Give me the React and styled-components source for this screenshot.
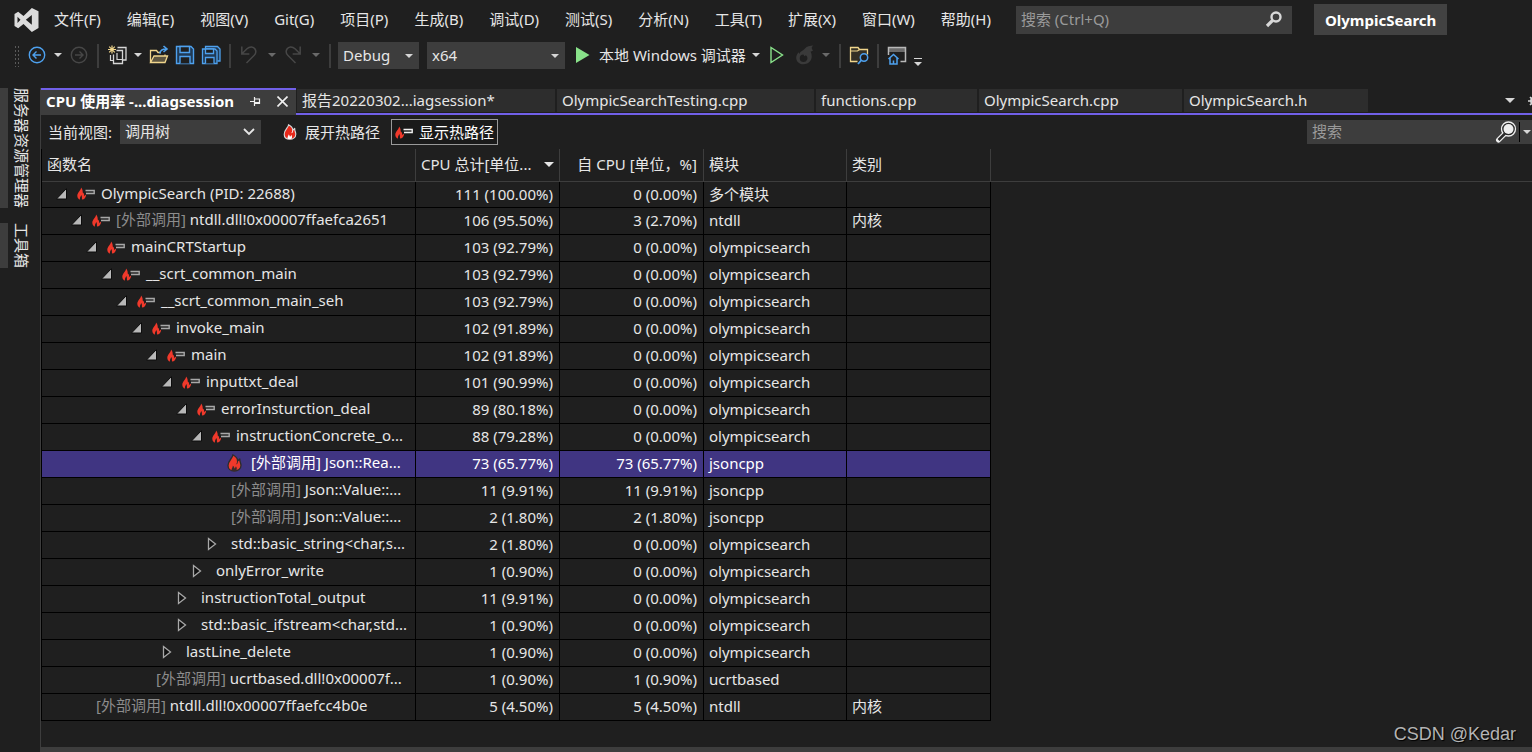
import { useState } from 'react';
import styled, { createGlobalStyle, css } from 'styled-components';

const bg = '#1f1f1f';
const panel = '#3d3d3d';
const tabBg = '#2d2d2d';
const purple = '#7160e8';
const text = '#e6e6e6';
const muted = '#9a9a9a';
const blue = '#4ea1ee';
const disabled = '#474747';

const menuItems = [
  '文件(F)',
  '编辑(E)',
  '视图(V)',
  'Git(G)',
  '项目(P)',
  '生成(B)',
  '调试(D)',
  '测试(S)',
  '分析(N)',
  '工具(T)',
  '扩展(X)',
  '窗口(W)',
  '帮助(H)',
];

const tabs = [
  { name: '报告20220302...iagsession*', width: 258 },
  { name: 'OlympicSearchTesting.cpp', width: 257 },
  { name: 'functions.cpp', width: 161 },
  { name: 'OlympicSearch.cpp', width: 203 },
  { name: 'OlympicSearch.h', width: 184 },
];

const rows = [
  { level: 0, state: 'open', icon: 'path', name: 'OlympicSearch (PID: 22688)', total: '111 (100.00%)', self: '0 (0.00%)', module: '多个模块' },
  { level: 1, state: 'open', icon: 'path', external: true, name: 'ntdll.dll!0x00007ffaefca2651', total: '106 (95.50%)', self: '3 (2.70%)', module: 'ntdll', category: '内核' },
  { level: 2, state: 'open', icon: 'path', name: 'mainCRTStartup', total: '103 (92.79%)', self: '0 (0.00%)', module: 'olympicsearch' },
  { level: 3, state: 'open', icon: 'path', name: '__scrt_common_main', total: '103 (92.79%)', self: '0 (0.00%)', module: 'olympicsearch' },
  { level: 4, state: 'open', icon: 'path', name: '__scrt_common_main_seh', total: '103 (92.79%)', self: '0 (0.00%)', module: 'olympicsearch' },
  { level: 5, state: 'open', icon: 'path', name: 'invoke_main', total: '102 (91.89%)', self: '0 (0.00%)', module: 'olympicsearch' },
  { level: 6, state: 'open', icon: 'path', name: 'main', total: '102 (91.89%)', self: '0 (0.00%)', module: 'olympicsearch' },
  { level: 7, state: 'open', icon: 'path', name: 'inputtxt_deal', total: '101 (90.99%)', self: '0 (0.00%)', module: 'olympicsearch' },
  { level: 8, state: 'open', icon: 'path', name: 'errorInsturction_deal', total: '89 (80.18%)', self: '0 (0.00%)', module: 'olympicsearch' },
  { level: 9, state: 'open', icon: 'path', name: 'instructionConcrete_o...', total: '88 (79.28%)', self: '0 (0.00%)', module: 'olympicsearch' },
  { level: 10, icon: 'flame', external: true, selected: true, name: 'Json::Rea...', total: '73 (65.77%)', self: '73 (65.77%)', module: 'jsoncpp' },
  { level: 10, external: true, name: 'Json::Value::...', total: '11 (9.91%)', self: '11 (9.91%)', module: 'jsoncpp' },
  { level: 10, external: true, name: 'Json::Value::...', total: '2 (1.80%)', self: '2 (1.80%)', module: 'jsoncpp' },
  { level: 10, state: 'closed', name: 'std::basic_string<char,s...', total: '2 (1.80%)', self: '0 (0.00%)', module: 'olympicsearch' },
  { level: 9, state: 'closed', name: 'onlyError_write', total: '1 (0.90%)', self: '0 (0.00%)', module: 'olympicsearch' },
  { level: 8, state: 'closed', name: 'instructionTotal_output', total: '11 (9.91%)', self: '0 (0.00%)', module: 'olympicsearch' },
  { level: 8, state: 'closed', name: 'std::basic_ifstream<char,std...', total: '1 (0.90%)', self: '0 (0.00%)', module: 'olympicsearch' },
  { level: 7, state: 'closed', name: 'lastLine_delete', total: '1 (0.90%)', self: '0 (0.00%)', module: 'olympicsearch' },
  { level: 5, external: true, name: 'ucrtbased.dll!0x00007f...', total: '1 (0.90%)', self: '1 (0.90%)', module: 'ucrtbased' },
  { level: 1, external: true, name: 'ntdll.dll!0x00007ffaefcc4b0e', total: '5 (4.50%)', self: '5 (4.50%)', module: 'ntdll', category: '内核' },
];

function Caret({ color = '#d6d6d6' }) {
  return (
    <svg width="8" height="4" viewBox="0 0 8 4">
      <path d="M0 0h8L4 4z" fill={color} />
    </svg>
  );
}

function Logo() {
  return (
    <svg width="25" height="24" viewBox="45 22 72 72">
      <path
        fillRule="evenodd"
        fill="#dcdcdc"
        d="M45 40 56 33 72 46 97 22l20 10v50L97 94 72 70 56 83l-11-7zM54 48v19l9-9.500zM97 43 79 57.500 97 72z"
      />
    </svg>
  );
}

function BackIcon({ color, flip }) {
  return (
    <svg width="18" height="18" viewBox="0 0 18 18" fill="none" stroke={color} strokeWidth="1.400">
      <circle cx="9" cy="9" r="7.700" />
      <path d={flip ? 'M5 9h8M9.500 5.500 13 9l-3.500 3.500' : 'M13 9H5M8.500 5.500 5 9l3.500 3.500'} />
    </svg>
  );
}

function NewIcon() {
  return (
    <svg width="20" height="20" viewBox="0 0 20 20" fill="none">
      <path d="M5 0.500v8M1 4.500h8M2.200 1.700l5.600 5.600M7.800 1.700 2.200 7.300" stroke="#f0d58c" strokeWidth="1.200" />
      <path d="M10.500 2.500h8.500v12.500h-3" stroke="#d6d6d6" strokeWidth="1.300" />
      <path d="M9.500 5.500h6v13h-9v-9" stroke="#d6d6d6" strokeWidth="1.300" />
      <path d="M10 8v6.500h5M3.500 10v5.500h3" stroke="#d6d6d6" strokeWidth="1.200" />
    </svg>
  );
}

function OpenIcon() {
  return (
    <svg width="20" height="20" viewBox="0 0 20 20" fill="none">
      <path d="M1.500 17.500V5.500h6l1.500 2h3M16 11V9.500" stroke="#f0d58c" strokeWidth="1.300" />
      <path d="M1.500 17.500 5 11h13.500L16 17.500z" fill="#5d5541" stroke="#f0d58c" strokeWidth="1.300" />
      <path d="M11 8.500c0-3 2-4.500 6.500-4.500M14.500 1l3.500 3-3.500 3" stroke={blue} strokeWidth="1.600" />
    </svg>
  );
}

function SaveIcon() {
  return (
    <svg width="20" height="20" viewBox="0 0 20 20" fill="#203a55" stroke={blue} strokeWidth="1.400">
      <path d="M1.500 1.500h14.500l2.500 2.500v14.500h-17z" />
      <path d="M5 1.500h9.500v6H5zM5 18.500v-7h10v7" fill={bg} />
    </svg>
  );
}

function SaveAllIcon() {
  return (
    <svg width="20" height="20" viewBox="0 0 20 20" fill="#203a55" stroke={blue} strokeWidth="1.300">
      <path d="M4.500 3.500v-2h12l2.500 2.500v12h-2.500" />
      <path d="M1.500 4h12.500l2 2v12.500H1.500z" />
      <path d="M4.500 4h8v4.500h-8zM4.500 18.500V12.500h8.500v6" fill={bg} />
    </svg>
  );
}

function UndoIcon({ flip }) {
  return (
    <svg width="18" height="20" viewBox="0 0 18 20" fill="none" stroke={disabled} strokeWidth="1.500">
      <g transform={flip ? 'translate(18 0) scale(-1 1)' : undefined}>
        <path d="M1.800 1.500v7.500h7.500M2.200 8.500 7 3.800C10 1 13.500 1.800 15 4c1.500 2.500 1 4.500-1 6.500L6.500 18" />
      </g>
    </svg>
  );
}

// big left tongue, smaller right tongue, hollow at the base
function FlameIcon({ width = 15, height = 18, outline = '#d8d8d8', fill = '#e8281a', inner = '#ffffff' }) {
  return (
    <svg width={width} height={height} viewBox="0 0 15 18">
      <path
        d="M5.800.8C6.200 3.500 1 6.500 1 11.500c0 3.300 2.500 5.700 6.300 5.700S14 14.800 14 11.500c0-2.300-1.300-3.500-1.200-6.500L10.500 7C10.800 4.500 9 2.500 5.800.8z"
        fill={fill}
        stroke={outline}
        strokeWidth="1.300"
        strokeLinejoin="round"
      />
      <path d="M5 17c-1.200-2 .8-3.200.8-5.200 1.200.8 1.600 1.700 1.600 2.700.6-.5 1.300-1.200 1.500-2.300 1.300 1.800 1.100 3.500.1 4.800z" fill={inner} />
      <path d="M10.500 7c.2 1.500-.5 2.500-1 3.200" fill="none" stroke={inner} strokeWidth="1" />
    </svg>
  );
}

function HotPathIcon({ bar = '#a8a8a8' }) {
  return (
    <svg width="18" height="13" viewBox="0 0 18 13">
      <path
        d="M4 .5c.5 2-3.700 5-3.700 8.300 0 2.200 1.300 3.500 2.700 3.800C2.500 10 4 9.500 4.200 8c1 1 .6 3 .8 4.500 2.300 0 4-2 4.200-5L7 9c.5-2-.3-3-1.300-3.500C5.900 3.500 5.200 1.500 4 .5z"
        fill="#f0392b"
      />
      <path d="M8.500 3.500h8.700v3H9" fill="#2a2a2a" stroke={bar} strokeWidth="1.400" />
    </svg>
  );
}

function HotReloadIcon() {
  return (
    <svg width="20" height="20" viewBox="0 0 20 20">
      <path
        fillRule="evenodd"
        fill="#3a3a3a"
        d="M18.500.5C16 2 16.500 4 18 5.500c-1 .8-1.800 1-2.500 1 1.600 3 1.800 6.500-.3 9.500-2.700 3.700-8.400 4.500-11.900 1.500C0 14.500.8 9.500 4 7.200c0 .8.200 1.300.6 1.800C5.500 5.500 8 6 10 3.500 11.800 1.200 15 .5 18.500.5zM8.500 9.500a3.800 3.800 0 1 0 .1 7.600 3.800 3.800 0 0 0 2.300-6.800l-1.600 1z"
      />
    </svg>
  );
}

function FolderSearchIcon() {
  return (
    <svg width="20" height="20" viewBox="0 0 20 20" fill="none">
      <path d="M8.500 16.500h-7v-14H9l1.500 2h8v5" fill="#343025" stroke="#f0d58c" strokeWidth="1.300" />
      <path d="M2 6h6.500l2-1.500" stroke="#f0d58c" strokeWidth="1.200" />
      <circle cx="15" cy="12.500" r="3.700" fill={bg} stroke={blue} strokeWidth="1.500" />
      <path d="M12.400 15.200 9 19" stroke={blue} strokeWidth="1.800" />
    </svg>
  );
}

function HomeWindowIcon() {
  return (
    <svg width="20" height="20" viewBox="0 0 20 20" fill="none">
      <path d="M1.500 10V2.500h17v14h-5" stroke="#b8b8b8" strokeWidth="1.500" />
      <path d="M1.500 6h17M1.500 4h17" stroke="#b8b8b8" strokeWidth="1.200" />
      <path d="m1.500 14 5-4.500 5 4.500M3 13v6h7v-6M6.500 19v-3.500" stroke={blue} strokeWidth="1.500" />
    </svg>
  );
}

function SearchIcon() {
  return (
    <svg width="18" height="18" viewBox="0 0 18 18" fill="none" stroke="#d8d8d8">
      <circle cx="11" cy="6" r="4.500" strokeWidth="2.400" />
      <path d="M7.500 9.500 2 15" strokeWidth="3.200" />
    </svg>
  );
}

function BigSearchIcon() {
  return (
    <svg width="22" height="22" viewBox="0 0 22 22">
      <path d="M10 12.500 3.500 19" stroke="#f0f0f0" strokeWidth="5" strokeLinecap="round" />
      <circle cx="13.500" cy="8" r="7" fill="#2a2a2a" stroke="#f0f0f0" strokeWidth="1.300" />
      <path d="M10 12.500 3.500 19" stroke="#2a2a2a" strokeWidth="2.500" />
      <circle cx="13.500" cy="8" r="5" fill="#f0f0f0" />
    </svg>
  );
}

function ExpandIcon({ open }) {
  return (
    <svg width="12" height="14" viewBox="0 0 12 14">
      {open ? (
        <path d="M10.500 1.500v10.500H.5z" fill="#b8b8b8" stroke="#0c0c0c" />
      ) : (
        <path d="M2.500 1.500 9.500 7l-7 5.500z" fill="#111" stroke="#a8a8a8" strokeWidth="1.300" />
      )}
    </svg>
  );
}

function TreeRow({ row }) {
  return (
    <Row $selected={row.selected}>
      <td>
        <NameCell $level={row.level}>
          <Expander>{row.state && <ExpandIcon open={row.state === 'open'} />}</Expander>
          {row.icon && (
            <RowIcon>
              {row.icon === 'path' ? (
                <HotPathIcon />
              ) : (
                <FlameIcon outline="#2c2c2c" fill="#f0392b" inner="#3a2a2a" />
              )}
            </RowIcon>
          )}
          <Name>
            {row.external && <External $selected={row.selected}>[外部调用] </External>}
            {row.name}
          </Name>
        </NameCell>
      </td>
      <NumberCell>{row.total}</NumberCell>
      <NumberCell>{row.self}</NumberCell>
      <td>{row.module}</td>
      <td>{row.category}</td>
    </Row>
  );
}

export default function App() {
  const [config, setConfig] = useState('Debug');
  const [view, setView] = useState('tree');

  return (
    <Page>
      <GlobalStyle />
      <MenuBar>
        <LogoBox>
          <Logo />
        </LogoBox>
        {menuItems.map((item) => (
          <MenuButton key={item}>{item}</MenuButton>
        ))}
        <QuickSearch>
          <input aria-label="搜索" placeholder="搜索 (Ctrl+Q)" />
          <SearchIcon />
        </QuickSearch>
        <Solution>OlympicSearch</Solution>
      </MenuBar>

      <Toolbar>
        <Grip />
        <ToolButton aria-label="后退"><BackIcon color={blue} /></ToolButton>
        <CaretButton aria-label="后退列表"><Caret /></CaretButton>
        <ToolButton aria-label="前进"><BackIcon color={disabled} flip /></ToolButton>
        <Separator />
        <ToolButton aria-label="新建"><NewIcon /></ToolButton>
        <CaretButton aria-label="新建列表"><Caret /></CaretButton>
        <ToolButton aria-label="打开"><OpenIcon /></ToolButton>
        <ToolButton aria-label="保存"><SaveIcon /></ToolButton>
        <ToolButton aria-label="全部保存"><SaveAllIcon /></ToolButton>
        <Separator />
        <SplitButton>
          <ToolButton aria-label="撤消"><UndoIcon /></ToolButton>
          <CaretButton aria-label="撤消列表"><Caret color="#6a6a6a" /></CaretButton>
        </SplitButton>
        <SplitButton>
          <ToolButton aria-label="重做"><UndoIcon flip /></ToolButton>
          <CaretButton aria-label="重做列表"><Caret color="#6a6a6a" /></CaretButton>
        </SplitButton>
        <Separator />
        <Selects>
          <SelectBox $width={81}>
            <select aria-label="配置" value={config} onChange={(e) => setConfig(e.target.value)}>
              <option>Debug</option>
              <option>Release</option>
            </select>
            <Caret />
          </SelectBox>
          <SelectBox $width={138}>
            <select aria-label="平台">
              <option>x64</option>
            </select>
            <Caret />
          </SelectBox>
        </Selects>
        <RunButton>
          <svg width="14" height="18" viewBox="0 0 14 18">
            <path d="M0 1v16l13.500-8z" fill="#89e28a" />
          </svg>
          本地 Windows 调试器
        </RunButton>
        <CaretButton aria-label="调试器列表"><Caret /></CaretButton>
        <StartButton aria-label="开始执行">
          <svg width="14" height="18" viewBox="0 0 14 18">
            <path d="M1 1.500v15L12.500 9z" fill="none" stroke="#89e28a" strokeWidth="1.400" />
          </svg>
        </StartButton>
        <ToolButton aria-label="热重载"><HotReloadIcon /></ToolButton>
        <CaretButton aria-label="热重载列表"><Caret color="#6a6a6a" /></CaretButton>
        <Separator />
        <ToolButton aria-label="在文件中查找"><FolderSearchIcon /></ToolButton>
        <Separator />
        <ToolButton aria-label="主窗口"><HomeWindowIcon /></ToolButton>
        <Overflow aria-label="工具栏选项">
          <svg width="8" height="8" viewBox="0 0 8 8">
            <path d="M0 0h8v1H0zM0 4h8L4 8z" fill="#d6d6d6" />
          </svg>
        </Overflow>
      </Toolbar>

      <Workspace>
        <SideRail>
          <SideTab>服务器资源管理器</SideTab>
          <SideTab>工具箱</SideTab>
        </SideRail>
        <Document>
          <TabStrip>
            <ActiveTab>
              CPU 使用率 -...diagsession
              <TabTool aria-label="固定">
                <svg width="11" height="9" viewBox="0 0 11 9" fill="none" stroke="#f0f0f0">
                  <path d="M0 4.500h4M4.500 0v9M4.500 2h5v5" strokeWidth="1.200" />
                  <path d="M4.500 6h5.500" strokeWidth="2" />
                </svg>
              </TabTool>
              <TabTool aria-label="关闭">
                <svg width="11" height="11" viewBox="0 0 11 11" stroke="#f0f0f0" strokeWidth="1.600">
                  <path d="m.5.5 10 10M10.500.5l-10 10" />
                </svg>
              </TabTool>
            </ActiveTab>
            <OtherTabs>
              {tabs.map((tab) => (
                <Tab key={tab.name} $width={tab.width}>{tab.name}</Tab>
              ))}
              <TabEnd>
                <TabTool aria-label="活动文件">
                  <svg width="10" height="5" viewBox="0 0 10 5">
                    <path d="M0 0h10L5 5z" fill="#d6d6d6" />
                  </svg>
                </TabTool>
                <GearButton aria-label="选项卡设置">
                  <svg width="12" height="12" viewBox="0 0 12 12" fill="none" stroke="#d6d6d6">
                    <circle cx="6" cy="6" r="3" strokeWidth="2" />
                    <path d="M6 0v3M6 9v3M0 6h3M9 6h3M2 2l2 2M8 8l2 2M10 2 8 4M4 8l-2 2" strokeWidth="1.600" />
                  </svg>
                </GearButton>
              </TabEnd>
            </OtherTabs>
          </TabStrip>

          <ViewBar>
            <label htmlFor="view">当前视图:</label>
            <SelectBox $width={141} $small>
              <select id="view" value={view} onChange={(e) => setView(e.target.value)}>
                <option value="tree">调用树</option>
                <option value="modules">模块</option>
              </select>
              <svg width="12" height="8" viewBox="0 0 12 8" fill="none" stroke="#e6e6e6" strokeWidth="1.800">
                <path d="m1 1 5 5 5-5" />
              </svg>
            </SelectBox>
            <ViewButton>
              <FlameIcon width={14} height={16} />
              展开热路径
            </ViewButton>
            <ViewButton $checked aria-pressed="true">
              <HotPathIcon bar="#f0f0f0" />
              显示热路径
            </ViewButton>
            <TreeSearch>
              <input aria-label="搜索调用树" placeholder="搜索" />
              <BigSearchIcon />
              <SearchCaret aria-label="搜索选项"><Caret /></SearchCaret>
            </TreeSearch>
          </ViewBar>

          <TableArea>
            <Table>
              <colgroup>
                <col width="374" />
                <col width="144" />
                <col width="144" />
                <col width="143" />
                <col width="144" />
              </colgroup>
              <thead>
                <tr>
                  <th>函数名</th>
                  <th>
                    <SortHeader>
                      CPU 总计[单位...
                      <svg width="10" height="5" viewBox="0 0 10 5">
                        <path d="M0 0h10L5 5z" fill="#e6e6e6" />
                      </svg>
                    </SortHeader>
                  </th>
                  <NumberHeader>自 CPU [单位，%]</NumberHeader>
                  <th>模块</th>
                  <th>类别</th>
                </tr>
              </thead>
              <tbody>
                {rows.map((row, index) => (
                  <TreeRow key={index} row={row} />
                ))}
              </tbody>
            </Table>
          </TableArea>
          <BottomBar />
        </Document>
      </Workspace>
      <Watermark>CSDN @Kedar</Watermark>
    </Page>
  );
}

const GlobalStyle = createGlobalStyle`
  * {
    box-sizing: border-box;
  }
  body {
    margin: 0;
    background: ${bg};
  }
  body, button, input, select {
    font-family: 'Noto Sans', 'Noto Sans CJK SC', sans-serif;
    font-size: 15px;
    line-height: 20px;
    color: ${text};
  }
  button {
    background: none;
    border: 0;
    padding: 0;
    white-space: nowrap;
  }
  svg {
    display: block;
    flex: none;
  }
`;
const Page = styled.div`
  position: relative;
  display: flex;
  flex-direction: column;
  min-height: 100vh;
  overflow: hidden;
  background: ${bg};
`;
const MenuBar = styled.nav`
  display: flex;
  align-items: center;
  height: 39px;
  padding-left: 14px;
`;
const LogoBox = styled.div`
  width: 27px;
`;
const MenuButton = styled.button`
  padding: 0 13px 2px;
`;
const searchBox = css`
  display: flex;
  align-items: center;
  background: ${panel};
  input {
    flex: 1;
    min-width: 0;
    padding: 0 5px 2px;
    border: 0;
    background: transparent;
    outline: none;
  }
  input::placeholder {
    color: ${muted};
    opacity: 1;
  }
`;
const QuickSearch = styled.div`
  ${searchBox}
  width: 276px;
  height: 28px;
  margin-left: 12px;
  padding-right: 9px;
`;
const Solution = styled.button`
  height: 31px;
  margin-left: 22px;
  padding: 0 11px;
  background: #424242;
  color: #fff;
  font-weight: 700;
`;
const Toolbar = styled.div`
  display: flex;
  align-items: center;
  height: 33px;
  padding-left: 14px;
`;
const Grip = styled.div`
  width: 6px;
  height: 22px;
  margin-right: 4px;
  background-image: radial-gradient(#5a5a5a 1px, transparent 1px);
  background-size: 3px 4px;
`;
const ToolButton = styled.button`
  display: flex;
  align-items: center;
  justify-content: center;
  width: 26px;
  height: 26px;
  padding-bottom: 2px;
`;
const CaretButton = styled(ToolButton)`
  width: 16px;
`;
const StartButton = styled(ToolButton)`
  margin-right: 2px;
`;
const SplitButton = styled.div`
  display: flex;
  gap: 2px;
`;
const Separator = styled.div`
  width: 2px;
  height: 24px;
  margin: 0 5px;
  background: ${panel};
`;
const Selects = styled.div`
  display: flex;
  gap: 8px;
  margin-left: 2px;
`;
const SelectBox = styled.div`
  display: grid;
  align-items: center;
  width: ${({ $width }) => $width}px;
  height: ${({ $small }) => ($small ? 24 : 27)}px;
  background: ${panel};
  select {
    grid-area: 1 / 1;
    width: 100%;
    height: 100%;
    padding: 0 5px 2px;
    border: 0;
    background: transparent;
    appearance: none;
  }
  svg {
    grid-area: 1 / 1;
    justify-self: end;
    margin-right: 6px;
    pointer-events: none;
  }
`;
const RunButton = styled.button`
  display: flex;
  align-items: center;
  gap: 9px;
  margin: 0 2px 0 11px;
  padding-bottom: 2px;
`;
const Overflow = styled(CaretButton)`
  align-items: flex-end;
  padding-bottom: 3px;
`;
const Workspace = styled.div`
  display: flex;
  flex: 1;
  padding-top: 16px;
`;
const SideRail = styled.aside`
  display: flex;
  flex-direction: column;
  align-items: flex-start;
  gap: 15px;
  width: 40px;
  flex: none;
`;
const SideTab = styled.button`
  padding-left: 4px;
  border-left: 8px solid ${panel};
  writing-mode: vertical-rl;
  text-orientation: sideways;
`;
const Document = styled.main`
  display: flex;
  flex-direction: column;
  flex: 1;
  min-width: 0;
  border-left: 1px solid ${panel};
`;
const TabStrip = styled.div`
  display: flex;
  height: 27px;
`;
const ActiveTab = styled.div`
  display: flex;
  align-items: center;
  flex: none;
  width: 255px;
  padding: 0 8px 3px 5px;
  border-top: 2px solid ${purple};
  background: ${panel};
  color: #fff;
  font-weight: 700;
  white-space: nowrap;
`;
const TabTool = styled.button`
  display: flex;
  align-items: center;
  justify-content: center;
  width: 12px;
  height: 16px;
  margin-left: auto;
`;
const OtherTabs = styled.div`
  display: flex;
  flex: 1;
  gap: 2px;
  padding: 1px 0 1px 1px;
  border-bottom: 2px solid ${purple};
`;
const Tab = styled.button`
  width: ${({ $width }) => $width}px;
  flex: none;
  padding: 0 0 2px 5px;
  background: ${tabBg};
  text-align: left;
`;
const TabEnd = styled.div`
  display: flex;
  align-items: center;
  margin-left: auto;
  gap: 12px;
`;
const GearButton = styled.button`
  width: 4px;
  overflow: hidden;
`;
const ViewBar = styled.div`
  display: flex;
  align-items: center;
  height: 34px;
  padding-left: 7px;
  label {
    margin-right: 8px;
    white-space: nowrap;
  }
`;
const ViewButton = styled.button`
  display: flex;
  align-items: center;
  height: 26px;
  ${({ $checked }) =>
    $checked
      ? css`
          gap: 6px;
          margin-left: 11px;
          padding: 0 3px;
          border: 1px solid #999;
          background: #1a1a1a;
          color: #fff;
        `
      : css`
          gap: 8px;
          margin-left: 22px;
        `}
`;
const TreeSearch = styled.div`
  ${searchBox}
  width: 225px;
  height: 24px;
  margin-left: auto;
`;
const SearchCaret = styled.button`
  width: 13px;
  height: 20px;
  margin-left: 2px;
  padding-left: 3px;
  border-left: 1px solid #000;
`;
const TableArea = styled.div`
  flex: 1;
  background: linear-gradient(${panel}, ${panel}) 0 32px / 100% 1px no-repeat;
`;
const Table = styled.table`
  width: 950px;
  table-layout: fixed;
  border-collapse: separate;
  border-spacing: 0;
  border-left: 1px solid #000;
  th {
    height: 33px;
    padding: 0 5px 2px;
    border-right: 1px solid ${panel};
    border-bottom: 1px solid ${panel};
    font-weight: 400;
    text-align: left;
    white-space: nowrap;
  }
  td {
    height: 27px;
    padding: 0 5px 2px;
    border-right: 1px solid #000;
    border-bottom: 1px solid #000;
    white-space: nowrap;
  }
  td:first-child {
    padding: 0;
  }
  tbody tr:first-child td {
    height: 26px;
  }
`;
const NumberHeader = styled.th`
  && {
    padding-right: 6px;
    text-align: right;
  }
`;
const SortHeader = styled.div`
  display: flex;
  align-items: center;
  justify-content: space-between;
`;
const Row = styled.tr`
  ${({ $selected }) =>
    $selected &&
    css`
      background: #403582;
      color: #fff;
    `}
`;
const NumberCell = styled.td`
  && {
    padding-right: 6px;
    text-align: right;
  }
`;
const NameCell = styled.div`
  display: flex;
  align-items: center;
  padding-left: ${({ $level }) => 14 + $level * 15}px;
  padding-bottom: 4px;
`;
const Expander = styled.span`
  width: 21px;
  padding-top: 2px;
`;
const RowIcon = styled.span`
  width: 20px;
  padding-top: 2px;
`;
const Name = styled.span`
  margin-left: 4px;
`;
const External = styled.span`
  color: ${({ $selected }) => ($selected ? '#fff' : '#8c8c8c')};
`;
const BottomBar = styled.div`
  height: 5px;
  background: ${panel};
`;
const Watermark = styled.div`
  position: absolute;
  right: 16px;
  bottom: 6px;
  font-family: 'Liberation Sans', sans-serif;
  font-size: 18px;
  line-height: 24px;
  color: #b4b4b4;
  text-shadow: 1px 1px 1px #000;
`;
